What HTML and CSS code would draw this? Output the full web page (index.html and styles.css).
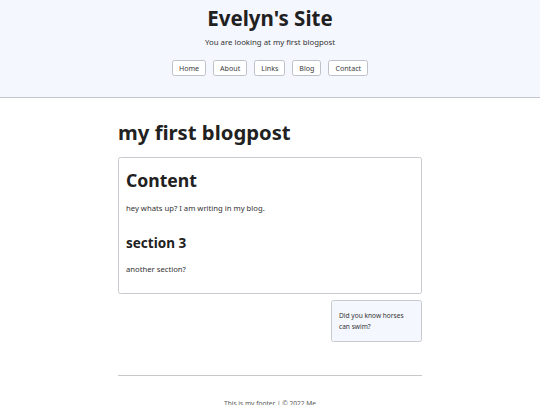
FILE: index.html
```html
<!DOCTYPE html>
<html lang="en">
<head>
<meta charset="utf-8">
<title>Evelyn's Site</title>
<link rel="stylesheet" href="styles.css">
</head>
<body>
<header class="site-header">
  <h1 class="site-title">Evelyn's Site</h1>
  <p class="site-sub">You are looking at my first blogpost</p>
  <nav class="nav">
    <a class="nav-link" href="#">Home</a>
    <a class="nav-link" href="#">About</a>
    <a class="nav-link" href="#">Links</a>
    <a class="nav-link" href="#">Blog</a>
    <a class="nav-link" href="#">Contact</a>
  </nav>
</header>
<main class="main">
  <h1 class="post-title">my first blogpost</h1>
  <section class="card">
    <h2 class="card-h2">Content</h2>
    <p class="text">hey whats up? I am writing in my blog.</p>
    <h3 class="card-h3">section 3</h3>
    <p class="text">another section?</p>
  </section>
  <div class="aside-row">
    <aside class="aside">Did you know horses can swim?</aside>
  </div>
  <hr class="rule">
</main>
<footer class="footer">This is my footer | © 2022 Me</footer>
</body>
</html>
```

FILE: styles.css
```css
* { box-sizing: border-box; }
html, body { margin: 0; padding: 0; }
body {
  font-family: "Noto Sans", "Open Sans", "DejaVu Sans", sans-serif;
  color: #212121;
  background: #fff;
}
.site-header {
  background: #f5f7ff;
  border-bottom: 1px solid #c4c5cc;
  text-align: center;
  height: 98px;
  padding-top: 4px;
}
.site-title {
  margin: 0;
  font-size: 20.5px;
  line-height: 28px;
  font-weight: 700;
}
.site-sub {
  margin: 4px 0 0;
  font-size: 7.8px;
  line-height: 12px;
  color: #333;
}
.nav {
  display: flex;
  justify-content: center;
  gap: 7px;
  margin-top: 12px;
}
.nav-link {
  display: block;
  font-size: 7.1px;
  line-height: 14px;
  padding: 0 6px;
  border: 1px solid #bfc1c9;
  border-radius: 2.5px;
  color: #3a3a3a;
  text-decoration: none;
  background: #fff;
}
.main {
  width: 304px;
  margin: 0 auto;
  padding-top: 19px;
}
.post-title {
  margin: 0;
  font-size: 20.3px;
  line-height: 30px;
  font-weight: 700;
}
.card {
  margin-top: 10px;
  border: 1px solid #c9cad0;
  border-radius: 2.5px;
  padding: 9px 7px 14px;
  height: 137px;
}
.card-h2 {
  margin: 0;
  font-size: 17.6px;
  line-height: 26px;
  font-weight: 700;
}
.text {
  margin: 9px 0 0;
  font-size: 7.7px;
  line-height: 12px;
  color: #333;
}
.card-h3 {
  margin: 19px 0 0;
  font-size: 13.5px;
  line-height: 20px;
  font-weight: 700;
}
.card-h3 + .text { margin-top: 10px; }
.aside-row {
  display: flex;
  justify-content: flex-end;
  margin-top: 6px;
}
.aside {
  width: 91px;
  height: 42px;
  background: #f5f7ff;
  border: 1px solid #c9cad0;
  border-radius: 2.5px;
  padding: 9px 7px;
  font-size: 6.6px;
  line-height: 11px;
  color: #333;
}
.rule {
  margin: 33px 0 0;
  border: 0;
  border-top: 1px solid #c9c9c9;
  height: 0;
}
.footer {
  text-align: center;
  font-size: 6.6px;
  color: #585858;
  margin-top: 23px;
  line-height: 10px;
}
```
